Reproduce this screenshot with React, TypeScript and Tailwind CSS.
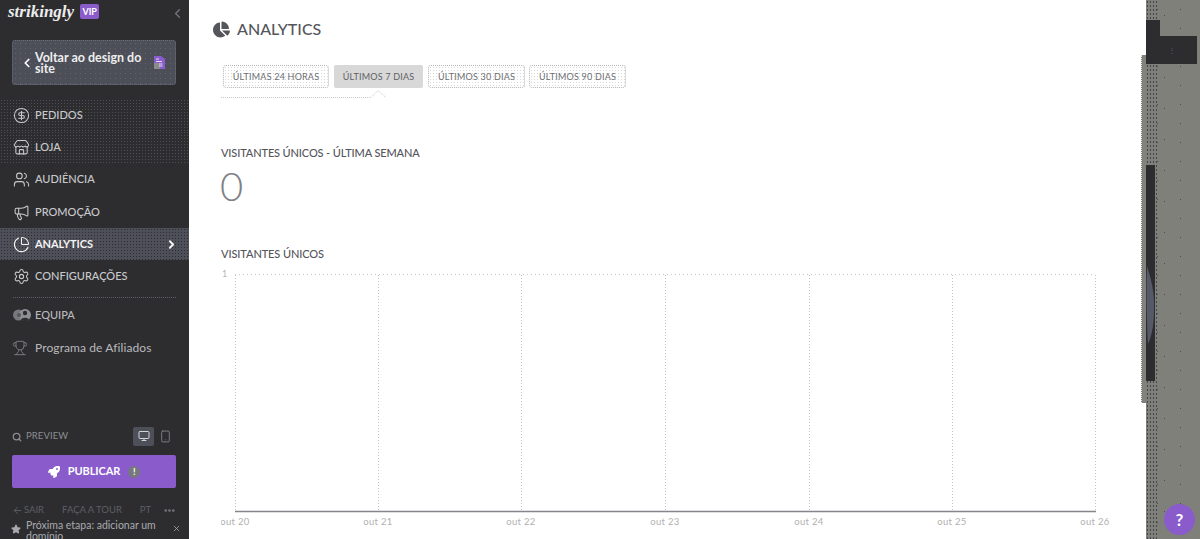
import {
  ChevronLeft,
  ChevronRight,
  CircleDollarSign,
  Store,
  Users,
  Megaphone,
  ChartPie,
  Settings,
  Trophy,
  Search,
  Monitor,
  Smartphone,
  ArrowLeft,
  Ellipsis,
  X,
} from "lucide-react";
import { FaChartPie, FaRocket, FaStar } from "react-icons/fa";

const navItems = [
  { label: "PEDIDOS", Icon: CircleDollarSign, dots: true },
  { label: "LOJA", Icon: Store, dots: true },
  { label: "AUDIÊNCIA", Icon: Users },
  { label: "PROMOÇÃO", Icon: Megaphone },
  { label: "ANALYTICS", Icon: ChartPie, active: true },
  { label: "CONFIGURAÇÕES", Icon: Settings },
];

const tabs = [
  { label: "ÚLTIMAS 24 HORAS", width: "w-[106px]" },
  { label: "ÚLTIMOS 7 DIAS", width: "w-[89px]", active: true },
  { label: "ÚLTIMOS 30 DIAS", width: "w-[97px]" },
  { label: "ÚLTIMOS 90 DIAS", width: "w-[97px]" },
];

const days = ["out 20", "out 21", "out 22", "out 23", "out 24", "out 25", "out 26"];

function TeamIcon() {
  return (
    <svg width="20" height="16" viewBox="0 0 20 16" className="shrink-0">
      <circle cx="6.500" cy="8" r="5.500" fill="#77787c" />
      <circle cx="13" cy="8" r="6" fill="#8e8f94" />
      <circle cx="13" cy="6" r="2.200" fill="#2d2d30" />
      <path d="M9 13c.5-3 7.500-3 8 0l-4 1.500z" fill="#2d2d30" />
      <circle cx="7" cy="8" r="2" fill="#55565c" />
    </svg>
  );
}

function Chart() {
  const xs = [14, 157, 300, 444, 588, 731, 874];
  return (
    <svg width="905" height="261" viewBox="0 -3 905 261" className="block">
      <text x="1" y="6" fontSize="9" fill="#b5b5b5">
        1
      </text>
      <line x1="14" x2="874" y1="3.500" y2="3.500" stroke="#c8c8c8" strokeDasharray="1 3" />
      {xs.map((x) => (
        <line key={x} x1={x + 0.5} x2={x + 0.5} y1="4" y2="240" stroke="#c4c4c4" strokeDasharray="1 2" />
      ))}
      <line x1="14" x2="875" y1="240.500" y2="240.500" stroke="#85858a" strokeWidth="1.500" />
      {days.map((d, i) => (
        <text key={d} x={xs[i]} y="254" fontSize="9.500" letterSpacing="0.300" fill="#b0b0b0" textAnchor="middle">
          {d}
        </text>
      ))}
    </svg>
  );
}

export default function App() {
  return (
    <div className="relative flex h-[539px] w-[1200px] overflow-hidden bg-white font-['Lato',sans-serif]">
      <aside className="flex w-[189px] shrink-0 flex-col overflow-hidden bg-[#2d2d30]">
        <div className="flex h-[23px] items-center pl-2 pr-[4px]">
          <span className="font-['Liberation_Serif',serif] text-[17px] font-bold italic leading-none text-[#ececec]">
            strikingly
          </span>
          <span className="ml-[6px] w-[19px] rounded-[2px] bg-[#8a5bcb] text-center text-[9px] font-bold leading-[15px] text-white">
            VIP
          </span>
          <ChevronLeft className="ml-auto mt-[3px] h-[15px] w-[15px] text-[#77787c]" />
        </div>

        <button className="ml-3 mr-[13px] mt-[17px] flex h-[45px] items-center rounded-[3px] border border-dotted border-[#6b6e77] bg-[#4c4f58] bg-[radial-gradient(circle,#62656e_0.6px,transparent_0.7px)] bg-[length:5px_5px] pl-[7px] pr-[10px] text-left">
          <ChevronLeft className="h-[14px] w-[14px] shrink-0 text-white" strokeWidth={3} />
          <span className="ml-[1px] flex-1 text-[12.500px] font-bold leading-[11px] text-[#eeeeee]">
            Voltar ao design do site
          </span>
          <svg width="11" height="13" viewBox="0 0 11 13" className="shrink-0">
            <path d="M0 0h7l4 3v10H0z" fill="#8a5bcb" />
            <path d="M0 7h6v6H0z" fill="#8b8b8b" />
            <path d="M2 3h3M2 5.500h6M5 8h3.500M5 10h3.500" stroke="#e4daf3" />
          </svg>
        </button>

        <nav className="mt-[14px] flex flex-col">
          {navItems.map(({ label, Icon, dots, active }) => (
            <div
              key={label}
              className={
                active
                  ? "flex h-[32.300px] items-center bg-[#4e5059] bg-[radial-gradient(circle,#2d2d30_0.6px,transparent_0.7px)] bg-[length:3px_3px] pl-[13px] pr-[11px] text-[#f2f2f2]"
                  : dots
                    ? "flex h-[32.300px] items-center bg-[radial-gradient(circle,#4e5059_0.6px,transparent_0.7px)] bg-[length:3px_3px] pl-[13px] pr-[11px] text-[#c9c9cc]"
                    : "flex h-[32.300px] items-center pl-[13px] pr-[11px] text-[#c9c9cc]"
              }
            >
              <Icon className="h-[17px] w-[17px] shrink-0" strokeWidth={1.5} />
              <span className={active ? "ml-[5px] text-[11px] font-bold tracking-[-0.1px]" : "ml-[5px] text-[11px] font-medium"}>
                {label}
              </span>
              {active && <ChevronRight className="ml-auto h-[13px] w-[13px]" strokeWidth={3.5} />}
            </div>
          ))}
        </nav>

        <div className="mx-[13px] mt-[4px] border-t border-dotted border-[#5f6067]" />

        <div className="mt-[1px] flex flex-col text-[#b9b9bc]">
          <div className="flex h-[33px] items-center pl-3">
            <TeamIcon />
            <span className="ml-[3px] text-[11px] font-medium">EQUIPA</span>
          </div>
          <div className="flex h-[33px] items-center pl-3">
            <Trophy className="h-[16px] w-[16px] shrink-0 text-[#77787c]" strokeWidth={1.5} />
            <span className="ml-[7px] text-[12px] tracking-[0.1px]">Programa de Afiliados</span>
          </div>
        </div>

        <div className="mt-auto h-[114px] shrink-0 overflow-hidden pl-3 pr-[13px]">
          <div className="flex h-[22px] items-center text-[#8c8d91]">
            <Search className="mt-[1px] h-[10px] w-[10px]" strokeWidth={3} />
            <span className="ml-[4px] mt-[1px] text-[9.500px] tracking-[0.1px]">PREVIEW</span>
            <span className="ml-auto flex h-[19px] w-[21px] items-center justify-center rounded-[2px] bg-[#4e5059] text-[#d4d4d6]">
              <Monitor className="h-[12px] w-[12px]" strokeWidth={2} />
            </span>
            <span className="ml-[4px] mr-[4px] flex h-[18px] w-[14px] items-center justify-center">
              <Smartphone className="h-[13px] w-[13px]" strokeWidth={1.5} />
            </span>
          </div>

          <button className="mt-[8px] flex h-[33px] w-full items-center justify-center rounded-[2px] bg-[#8a5bcb]">
            <FaRocket className="h-[12px] w-[12px] text-white" />
            <span className="ml-[8px] text-[11px] font-bold tracking-[-0.1px] text-white">PUBLICAR</span>
            <span className="ml-[8px] flex h-[12px] w-[12px] items-center justify-center rounded-full bg-[#77787c] text-[9px] font-bold leading-none text-white">
              !
            </span>
          </button>

          <div className="mt-[16px] flex h-[13px] items-center text-[9.500px] text-[#5e5f65]">
            <ArrowLeft className="h-[11px] w-[11px]" />
            <span className="ml-[1px]">SAIR</span>
            <span className="ml-[18px]">FAÇA A TOUR</span>
            <span className="ml-[18px]">PT</span>
            <Ellipsis className="ml-auto h-[13px] w-[13px] text-[#77787c]" strokeWidth={3} />
          </div>

          <div className="-mr-[5px] mt-[3px] flex items-start text-[#a9aaae]">
            <FaStar className="-ml-px mt-[4px] h-[10px] w-[10px] shrink-0" />
            <span className="ml-[5px] w-[135px] text-[10.500px] leading-[11px]">
              Próxima etapa: adicionar um domínio
            </span>
            <X className="ml-auto mt-[4px] h-[9px] w-[9px] shrink-0" />
          </div>
        </div>
      </aside>

      <main className="flex w-[957px] shrink-0">
        <div className="flex-1 pl-[24px] text-[#55565c]">
          <div className="flex h-[57px] items-center pt-[1px]">
            <FaChartPie className="h-[17px] w-[17px] text-[#55565c]" />
            <h1 className="ml-[7px] text-[16px] font-medium">ANALYTICS</h1>
          </div>

          <div className="ml-[10px] mt-[8px] flex gap-[5px]">
            {tabs.map((t, i) => (
              <div
                key={t.label}
                className={
                  t.active
                    ? `flex h-[23px] ${t.width} items-center justify-center rounded-[2px] bg-[#d8d8d8] bg-[radial-gradient(circle,#bdbdbd_0.5px,transparent_0.6px)] bg-[length:2px_2px] text-[9px] tracking-[0.2px] text-[#5f6065]`
                    : `flex h-[23px] ${t.width} ${i === 3 ? "-ml-px" : ""} items-center justify-center rounded-[3px] border border-dotted border-[#b5b5b5] bg-[radial-gradient(circle,#d8d8d8_0.6px,transparent_0.7px)] bg-[length:3px_3px] text-[9px] tracking-[0.2px] text-[#6e6f74]`
                }
              >
                {t.label}
              </div>
            ))}
          </div>

          <svg width="170" height="12" viewBox="0 0 170 12" className="ml-[8px] block">
            <path d="M0 9.500H150L157 2.500L165 9.500" fill="none" stroke="#c8c8c8" strokeDasharray="1 1" />
          </svg>

          <h2 className="ml-[8px] mt-[46px] text-[11px] font-medium leading-[14px] tracking-[-0.13px] text-[#55565c]">
            VISITANTES ÚNICOS - ÚLTIMA SEMANA
          </h2>
          <div className="ml-[7px] mt-[5px] text-[40px] font-light leading-[42px] text-[#808186]">0</div>

          <h2 className="ml-[8px] mt-[40px] text-[11px] font-medium leading-[14px] tracking-[-0.1px] text-[#55565c]">
            VISITANTES ÚNICOS
          </h2>
          <div className="mt-[7px] pl-[8px]">
            <Chart />
          </div>
        </div>

        <div className="w-[5px] shrink-0 pt-[55px]">
          <div className="h-[348px] w-[5px] border-l border-dotted border-[#e4e4e4] bg-[#82827c]" />
        </div>
      </main>

      <div className="relative flex-1 bg-[#80807a] bg-[radial-gradient(circle,#4b4d5a_0.6px,transparent_0.7px),radial-gradient(circle,#4b4d5a_0.6px,transparent_0.7px)] bg-[length:37px_31px,23px_19px]">
        <div className="absolute inset-y-0 left-0 w-[11px] bg-[radial-gradient(circle,#44464f_0.6px,transparent_0.7px)] bg-[length:3px_4px]" />
        <div className="relative pt-[20px]">
          <div className="h-[16px] w-[14px] bg-[#2d2d30]" />
          <div className="flex h-[28px] w-[51px] items-center justify-center bg-[#2d2d30]">
            <span className="text-[8px] leading-none text-[#5a5c68]">⋮</span>
          </div>
          <div className="mt-[101px] flex h-[216px] w-[9px] items-center bg-[#2d2d30]">
            <svg width="9" height="80" viewBox="0 0 9 80" className="mt-[65px]">
              <path d="M1 0C4 10 9 25 8 45C8 60 5 72 2 78C1 60 0 30 1 0z" fill="#565a68" />
            </svg>
          </div>
        </div>
      </div>

      <button className="absolute bottom-[4px] right-[5px] flex h-[31px] w-[31px] items-center justify-center rounded-full bg-[#8a5bcb] text-[17px] font-bold leading-none text-white">
        ?
      </button>
    </div>
  );
}
